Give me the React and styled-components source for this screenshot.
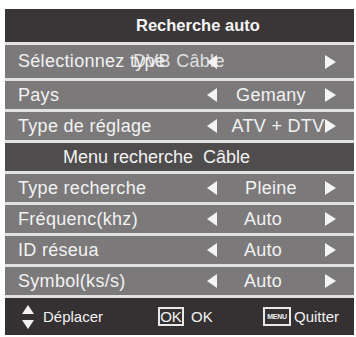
import React from "react";
import styled, { createGlobalStyle } from "styled-components";

const Global = createGlobalStyle`
  body {
    margin: 0;
    background: #ffffff;
    font-family: "Liberation Sans", Arial, sans-serif;
  }
`;

const Panel = styled.div`
  margin: 9px 0 0 5px;
  width: 349px;
  display: flex;
  flex-direction: column;
  gap: 3px;
  background: #e2e2e2;
`;

const Header = styled.div`
  height: 33px;
  background: #3a3637;
  color: #f4f4f4;
  font-weight: bold;
  font-size: 16.5px;
  display: flex;
  align-items: center;
  padding-left: 131px;
`;

const Row = styled.div`
  height: ${(p) => (p.tall ? 33 : 28)}px;
  background: #7b797a;
  color: #f2f2f2;
  font-size: 18px;
  letter-spacing: 0.3px;
  display: grid;
  grid-template-columns: 1fr 10px 108px 11px;
  align-items: center;
  padding: 0 18px 0 13px;
`;

const SubTitle = styled.div`
  height: 28px;
  background: #4f4c4d;
  color: #f2f2f2;
  font-size: 18px;
  display: flex;
  align-items: center;
  padding-left: 58px;
  white-space: pre;
`;

const Label = styled.span`
  white-space: nowrap;
`;

const Stack = styled.span`
  position: relative;
`;

const Overlay = styled.span`
  position: absolute;
  left: 3px;
  top: 0;
  white-space: nowrap;
  opacity: 0.85;
`;

const Value = styled.span`
  text-align: center;
  white-space: nowrap;
  transform: translateX(${(p) => p.shift || 0}px);
`;

const Tri = styled.span`
  width: 0;
  height: 0;
  border-top: 7px solid transparent;
  border-bottom: 7px solid transparent;
  ${(p) =>
    p.dir === "left"
      ? "border-right: 10px solid #f4f4f4;"
      : "border-left: 11px solid #f4f4f4;"}
`;

const Footer = styled.div`
  height: 37px;
  background: #353132;
  color: #f2f2f2;
  font-size: 15px;
  display: grid;
  grid-template-columns: 136px 105px auto;
  align-items: center;
  padding-left: 17px;
`;

const Hint = styled.div`
  display: flex;
  align-items: center;
  gap: ${(p) => p.gap || 5}px;
`;

const UpDown = styled.div`
  display: flex;
  flex-direction: column;
  gap: 6px;
  padding-top: 1px;

  span {
    width: 0;
    height: 0;
    border-left: 6px solid transparent;
    border-right: 6px solid transparent;
  }
  span:first-child {
    border-bottom: 9px solid #f2f2f2;
  }
  span:last-child {
    border-top: 9px solid #f2f2f2;
  }
`;

const KeyBox = styled.span`
  box-sizing: border-box;
  width: ${(p) => p.w}px;
  height: 19px;
  border: 2px solid #e8e8e8;
  display: flex;
  align-items: center;
  justify-content: center;
  font-size: ${(p) => p.fs}px;
  font-weight: ${(p) => (p.bold ? "bold" : "normal")};
  letter-spacing: ${(p) => (p.fs < 10 ? "-0.3px" : "0")};
`;

const rows = [
  { label: "Pays", value: "Gemany" },
  { label: "Type de réglage", value: "ATV + DTV", shift: 7 },
];

const rows2 = [
  { label: "Type recherche", value: "Pleine" },
  { label: "Fréquenc(khz)", value: "Auto", shift: -8 },
  { label: "ID réseua", value: "Auto", shift: -8 },
  { label: "Symbol(ks/s)", value: "Auto", shift: -8 },
];

function OptionRow({ label, value, shift, tall, children }) {
  return (
    <Row tall={tall}>
      <Label>{children || label}</Label>
      <Tri dir="left" />
      <Value shift={shift}>{value}</Value>
      <Tri dir="right" />
    </Row>
  );
}

export default function App() {
  return (
    <>
      <Global />
      <Panel>
        <Header>Recherche auto</Header>
        <OptionRow tall value="">
          Sélectionnez{" "}
          <Stack>
            type
            <Overlay>DVB Câble</Overlay>
          </Stack>
        </OptionRow>
        {rows.map((r) => (
          <OptionRow key={r.label} {...r} />
        ))}
        <SubTitle>Menu recherche  Câble</SubTitle>
        {rows2.map((r) => (
          <OptionRow key={r.label} {...r} />
        ))}
        <Footer>
          <Hint gap={9}>
            <UpDown>
              <span />
              <span />
            </UpDown>
            Déplacer
          </Hint>
          <Hint gap={7}>
            <KeyBox w={26} fs={15}>OK</KeyBox>
            OK
          </Hint>
          <Hint gap={3}>
            <KeyBox w={28} fs={7} bold>MENU</KeyBox>
            Quitter
          </Hint>
        </Footer>
      </Panel>
    </>
  );
}
